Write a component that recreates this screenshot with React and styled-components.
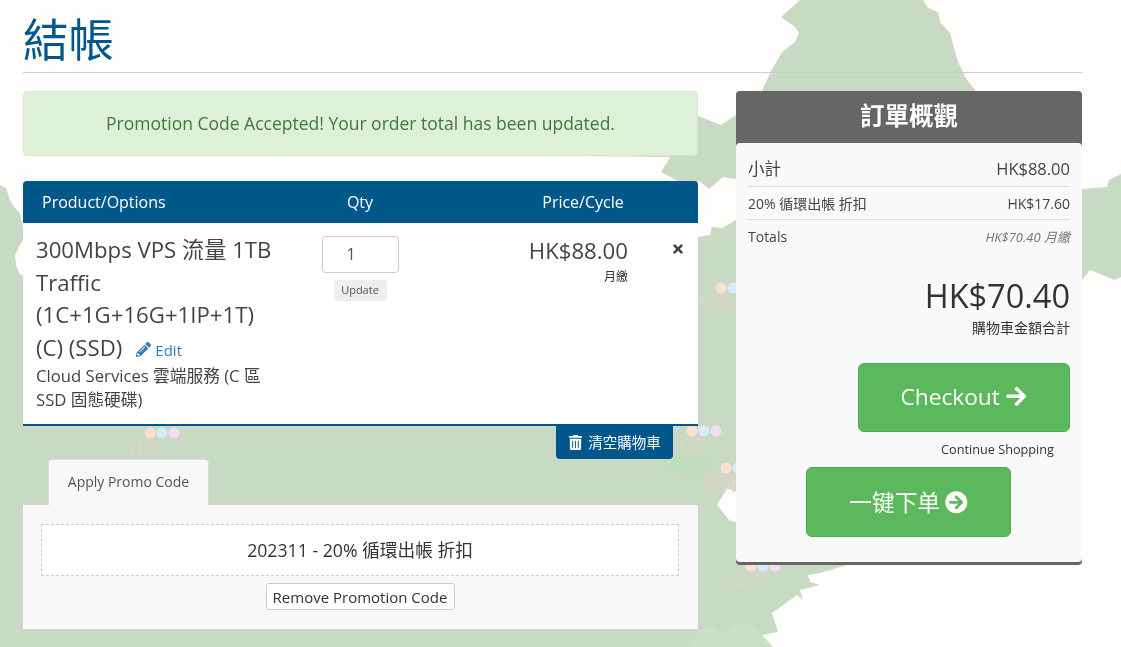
import styled, { createGlobalStyle } from "styled-components";
import { FaPencilAlt, FaTrashAlt, FaArrowRight, FaArrowCircleRight, FaTimes } from "react-icons/fa";

const GlobalStyle = createGlobalStyle`
  html, body {
    margin: 0;
    padding: 0;
    height: 100%;
    background: #fffefd;
    color: #333;
    font-family: "Open Sans", "Noto Sans CJK TC", sans-serif;
    font-size: 14px;
    overflow: hidden;
  }
  * { box-sizing: border-box; }
`;

const MapBg = styled.svg`
  position: fixed;
  top: 0;
  left: 0;
  width: 1121px;
  height: 647px;
  z-index: 0;
`;

const Page = styled.div`
  position: relative;
  z-index: 1;
  width: 1121px;
  padding: 10px 39px 0 23px;
`;

const Heading = styled.h1`
  margin: 0;
  height: 63px;
  border-bottom: 1px solid #ccc;
  color: #00578a;
  font-size: 45.5px;
  font-weight: 400;
  line-height: 58px;
`;

const Columns = styled.div`
  display: flex;
  gap: 38px;
  margin-top: 18px;
`;

const Main = styled.div`
  width: 675px;
`;

const Alert = styled.div`
  height: 65px;
  border: 1px solid #d6e9c6;
  border-radius: 4px;
  background: #dff0d8;
  color: #44763f;
  font-size: 17.5px;
  line-height: 63px;
  text-align: center;
`;

const TableHead = styled.div`
  display: grid;
  grid-template-columns: 275px 124px 1fr;
  align-items: center;
  height: 42px;
  margin-top: 25px;
  border-radius: 4px 4px 0 0;
  background: #00578a;
  color: #fff;
  font-size: 16px;
`;

const HeadCell = styled.div`
  text-align: ${(props) => props.$align || "center"};
  padding-left: ${(props) => props.$pad || 0}px;
`;

const Row = styled.div`
  display: grid;
  grid-template-columns: 275px 124px 221px 55px;
  height: 203px;
  border-bottom: 2px solid #00578a;
  background: #fff;
`;

const ProductCell = styled.div`
  padding: 11px 17px 0 13px;
`;

const ProductName = styled.div`
  color: #444;
  font-size: 22.2px;
  line-height: 32.5px;
`;

const EditLink = styled.a`
  margin-left: 14px;
  color: #337ab7;
  font-size: 15px;
  svg {
    margin-right: 4px;
    font-size: 15px;
    vertical-align: -1px;
  }
`;

const ProductGroup = styled.div`
  margin-top: -2px;
  color: #444;
  font-size: 16.7px;
  line-height: 24px;
`;

const QtyCell = styled.div`
  display: flex;
  flex-direction: column;
  align-items: center;
  padding-top: 13px;
`;

const QtyInput = styled.div`
  width: 77px;
  height: 37px;
  padding-right: 18px;
  border: 1px solid #ccc;
  border-radius: 4px;
  background: #fff;
  color: #555;
  font-size: 16px;
  line-height: 35px;
  text-align: center;
`;

const UpdateButton = styled.button`
  width: 53px;
  height: 21px;
  margin-top: 7px;
  padding: 0 0 2px;
  border: 0;
  border-radius: 3px;
  background: #eee;
  color: #555;
  font-family: inherit;
  font-size: 11px;
`;

const PriceCell = styled.div`
  padding: 14px 15px 0 0;
  text-align: right;
`;

const Price = styled.div`
  color: #444;
  font-size: 22.2px;
  line-height: 28px;
`;

const Cycle = styled.div`
  margin-top: 4px;
  color: #333;
  font-size: 12px;
  line-height: 16px;
`;

const RemoveCell = styled.div`
  padding: 19px 0 0 28px;
  color: #444;
  font-size: 14px;
  line-height: 14px;
`;

const ClearRow = styled.div`
  display: flex;
  justify-content: flex-end;
  padding-right: 25px;
`;

const ClearButton = styled.button`
  width: 117px;
  height: 33px;
  padding: 0 0 3px;
  border: 0;
  border-radius: 0 0 4px 4px;
  background: #00578a;
  color: #fff;
  font-family: inherit;
  font-size: 14.5px;
  svg {
    margin-right: 5px;
    font-size: 15px;
    vertical-align: -2px;
  }
`;

const Tab = styled.div`
  width: 161px;
  height: 46px;
  margin-left: 25px;
  border: 1px solid #ddd;
  border-bottom: 0;
  border-radius: 4px 4px 0 0;
  background: #f8f8f8;
  color: #555;
  font-size: 14px;
  line-height: 44px;
  text-align: center;
`;

const PromoPanel = styled.div`
  display: flex;
  flex-direction: column;
  align-items: center;
  height: 124px;
  padding: 19px 19px 0 18px;
  background: #f8f8f8;
`;

const PromoCode = styled.div`
  width: 100%;
  height: 52px;
  border: 1px dashed #ccc;
  background: #fff;
  color: #333;
  font-size: 17.7px;
  line-height: 51px;
  text-align: center;
`;

const RemovePromo = styled.button`
  width: 189px;
  height: 27px;
  margin-top: 7px;
  padding: 0;
  border: 1px solid #ccc;
  border-radius: 3px;
  background: #fff;
  color: #333;
  font-family: inherit;
  font-size: 15px;
`;

const Summary = styled.aside`
  width: 346px;
  height: 474px;
  border-bottom: 3px solid #666;
  border-radius: 4px;
  background: #666;
`;

const SummaryTitle = styled.div`
  height: 52px;
  color: #fff;
  font-size: 24.5px;
  font-weight: 700;
  line-height: 50px;
  text-align: center;
`;

const SummaryBody = styled.div`
  display: flex;
  flex-direction: column;
  height: 419px;
  padding: 7px 12px 0;
  border-radius: 4px;
  background: #f8f9fa;
`;

const Line = styled.div`
  display: flex;
  justify-content: space-between;
  align-items: center;
  flex: none;
  height: ${(props) => props.$h}px;
  border-bottom: ${(props) => (props.$last ? "0" : "1px solid #ddd")};
  color: #444;
  font-size: ${(props) => props.$size}px;
`;

const Recurring = styled.em`
  color: #777;
  font-size: 13px;
`;

const Total = styled.div`
  margin-top: 22px;
  color: #333;
  font-size: 32.5px;
  line-height: 44px;
  text-align: right;
`;

const TotalLabel = styled.div`
  margin-top: 1px;
  color: #333;
  font-size: 14px;
  line-height: 18px;
  text-align: right;
`;

const BigButton = styled.button`
  display: block;
  flex: none;
  width: ${(props) => props.$w}px;
  height: ${(props) => props.$h}px;
  margin-top: ${(props) => props.$top || 0}px;
  margin-left: ${(props) => props.$left}px;
  padding: 0 0 2px;
  border: 1px solid #4cae4c;
  border-radius: 6px;
  background: #5cb85c;
  color: #fff;
  font-family: "Open Sans", "Noto Sans CJK SC", sans-serif;
  font-size: 22.7px;
  svg {
    margin-left: 5px;
    vertical-align: -3px;
  }
`;

const ContinueLink = styled.a`
  display: block;
  height: 35px;
  padding-right: 16px;
  color: #333;
  font-size: 12.7px;
  line-height: 35px;
  text-align: right;
`;

const pins = [
  { name: "甘肃", x: 145, y: 457, dotX: 162, dotY: 433 },
  { name: "北京", x: 688, y: 453, dotX: 704, dotY: 431 },
  { name: "天津", x: 722, y: 491, dotX: 738, dotY: 468 },
  { name: "内蒙古", x: 720, y: 311, dotX: 733, dotY: 288 },
  { name: "山东", x: 747, y: 586, dotX: 763, dotY: 566 },
];

const ChinaMap = () => (
  <MapBg viewBox="0 0 1121 647">
    <path
      fill="#c8dac4"
      d="M0 185L6 188L10 200L14 207L20 213L23 228L23 150L670 150L680 130L698 116L721 125L736 115L762 91L770 73L782 52L795 42L799 33L795 27L781 17L800 0L923 0L928 8L938 12L940 22L950 33L958 62L967 80L1000 120L1082 189L1107 187L1109 180L1121 174L1121 277L1115 280L1090 270L1082 280L1000 400L847 565L820 573L808 575L810 582L820 585L800 590L803 600L797 595L772 613L778 632L762 635L773 647L0 647Z"
    />
    <path fill="#fffefd" d="M23 150L670 157L661 172L689 187L23 187Z" />
    <path fill="#fffefd" d="M698 180L709 189L723 177L736 179L736 220L722 228L712 227L710 235L698 237Z" />
    <path fill="#fffefd" d="M717 505L728 487L736 492L760 510L736 522L730 521Z" />
    <path fill="#fffefd" d="M23 240L20 245L15 255L16 265L20 275L30 276L30 240Z" />
    <path fill="#c2dcc0" d="M668 440L698 445L712 460L700 478L684 476L668 470Z" />
    <path fill="#cbdec7" d="M690 647L698 630L712 626L722 636L738 622L752 626L762 636L773 647Z" />
    <g fill="none" stroke="#cbdcc7" strokeWidth="1">
      <path d="M0 500L14 506L22 530L8 580L0 590" />
      <path d="M790 20L830 22L850 50L900 60L930 52L950 75" />
      <path d="M60 470L120 458L200 480L260 470" />
    </g>
    {pins.map((pin) => (
      <g key={pin.name}>
        <circle cx={pin.dotX - 12} cy={pin.dotY} r="5.5" fill="#fde0d4" />
        <circle cx={pin.dotX} cy={pin.dotY} r="5.5" fill="#d8eafb" />
        <circle cx={pin.dotX + 12} cy={pin.dotY} r="5.5" fill="#f3dcf4" />
        <text x={pin.x} y={pin.y} fill="#dfd3c8" fontSize="19" textAnchor="middle" fontFamily="'Noto Sans CJK SC', sans-serif">
          {pin.name}
        </text>
      </g>
    ))}
  </MapBg>
);

const App = () => (
  <>
    <GlobalStyle />
    <ChinaMap />
    <Page>
      <Heading>結帳</Heading>
      <Columns>
        <Main>
          <Alert>Promotion Code Accepted! Your order total has been updated.</Alert>
          <TableHead>
            <HeadCell $align="left" $pad={19}>Product/Options</HeadCell>
            <HeadCell>Qty</HeadCell>
            <HeadCell $pad={46}>Price/Cycle</HeadCell>
          </TableHead>
          <Row>
            <ProductCell>
              <ProductName>
                300Mbps VPS 流量 1TB Traffic (1C+1G+16G+1IP+1T) (C) (SSD)
                <EditLink><FaPencilAlt />Edit</EditLink>
              </ProductName>
              <ProductGroup>Cloud Services 雲端服務 (C 區 SSD 固態硬碟)</ProductGroup>
            </ProductCell>
            <QtyCell>
              <QtyInput>1</QtyInput>
              <UpdateButton>Update</UpdateButton>
            </QtyCell>
            <PriceCell>
              <Price>HK$88.00</Price>
              <Cycle>月繳</Cycle>
            </PriceCell>
            <RemoveCell><FaTimes /></RemoveCell>
          </Row>
          <ClearRow>
            <ClearButton><FaTrashAlt />清空購物車</ClearButton>
          </ClearRow>
          <Tab>Apply Promo Code</Tab>
          <PromoPanel>
            <PromoCode>202311 - 20% 循環出帳 折扣</PromoCode>
            <RemovePromo>Remove Promotion Code</RemovePromo>
          </PromoPanel>
        </Main>
        <Summary>
          <SummaryTitle>訂單概觀</SummaryTitle>
          <SummaryBody>
            <Line $h={37} $size={16.5}><span>小計</span><span>HK$88.00</span></Line>
            <Line $h={33} $size={14}><span>20% 循環出帳 折扣</span><span>HK$17.60</span></Line>
            <Line $h={32} $size={14} $last><span>Totals</span><Recurring>HK$70.40 月繳</Recurring></Line>
            <Total>HK$70.40</Total>
            <TotalLabel>購物車金額合計</TotalLabel>
            <BigButton $w={212} $h={69} $left={110} $top={26}>Checkout<FaArrowRight /></BigButton>
            <ContinueLink>Continue Shopping</ContinueLink>
            <BigButton $w={205} $h={70} $left={58}>一键下单<FaArrowCircleRight /></BigButton>
          </SummaryBody>
        </Summary>
      </Columns>
    </Page>
  </>
);

export default App;
